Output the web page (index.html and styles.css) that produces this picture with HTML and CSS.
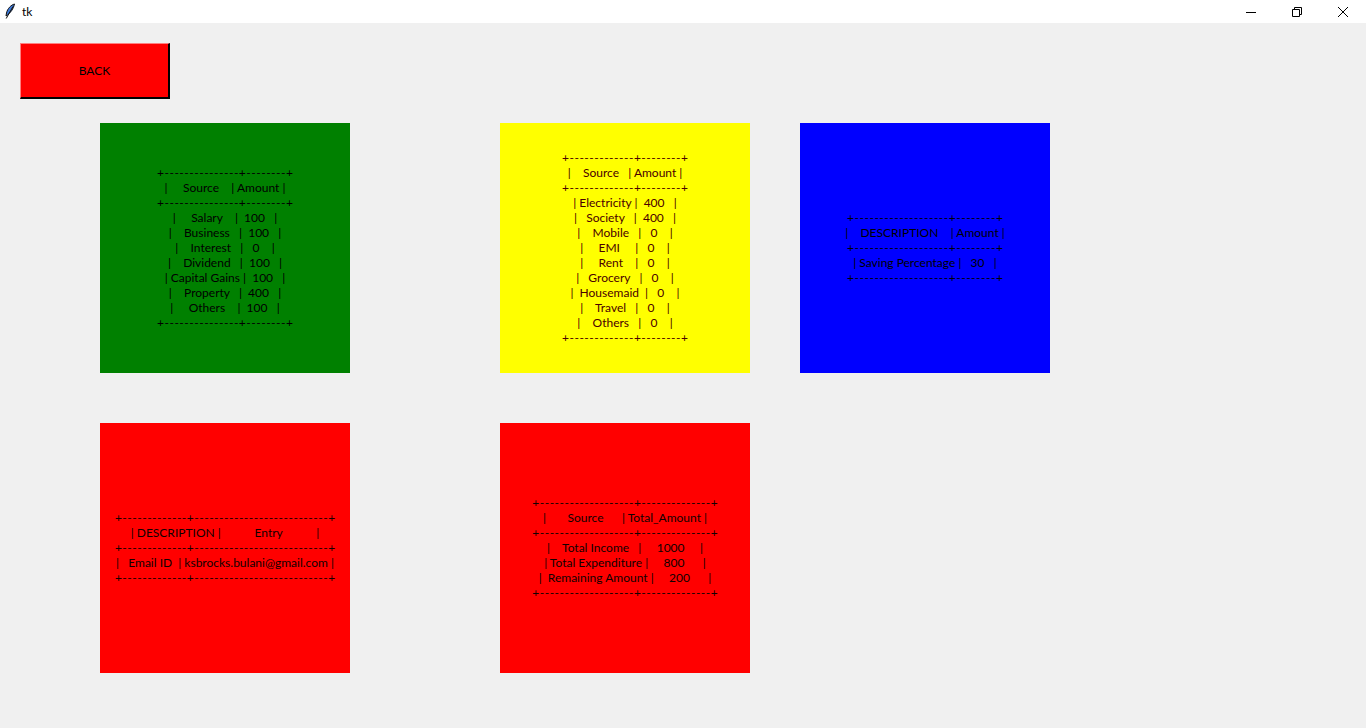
FILE: index.html
```html
<!DOCTYPE html>
<html>
<head>
<meta charset="utf-8">
<title>tk</title>
<link rel="stylesheet" href="styles.css">
</head>
<body>
<div class="titlebar">
  <div class="title-left">
    <svg class="feather" width="12" height="18" viewBox="0 0 12 18">
      <path d="M10.5 1 C7 2 3.5 5.5 2.5 10 L2 13 L3.5 12 C6.5 9.5 9.5 6 10.5 1 Z" fill="#3c78d8" stroke="#111" stroke-width="1"/>
      <path d="M9 3.5 L2.2 15.5" stroke="#111" stroke-width="1" fill="none"/>
    </svg>
    <span class="title-text">tk</span>
  </div>
  <div class="controls">
    <span class="ctl">
      <svg width="12" height="12" viewBox="0 0 12 12"><path d="M1 6.5 H11" stroke="#000" stroke-width="1"/></svg>
    </span>
    <span class="ctl">
      <svg width="12" height="12" viewBox="0 0 12 12"><path d="M1.5 3.5 H8.5 V10.5 H1.5 Z M3.5 3.5 V1.5 H10.5 V8.5 H8.5" stroke="#000" stroke-width="1" fill="none"/></svg>
    </span>
    <span class="ctl">
      <svg width="12" height="12" viewBox="0 0 12 12"><path d="M1 1 L11 11 M11 1 L1 11" stroke="#000" stroke-width="1"/></svg>
    </span>
  </div>
</div>
<div class="window">
  <button class="back">BACK</button>
  <div class="grid">
<div class="card green col1"><div class="tbl"><span class="rule">+---------------+--------+</span>
|     Source    | Amount |
<span class="rule">+---------------+--------+</span>
|     Salary    |  100   |
|    Business   |  100   |
|    Interest   |   0    |
|    Dividend   |  100   |
| Capital Gains |  100   |
|    Property   |  400   |
|     Others    |  100   |
<span class="rule">+---------------+--------+</span></div></div>
<div class="card yellow col3"><div class="tbl"><span class="rule">+-------------+--------+</span>
|    Source   | Amount |
<span class="rule">+-------------+--------+</span>
| Electricity |  400   |
|   Society   |  400   |
|    Mobile   |   0    |
|     EMI     |   0    |
|     Rent    |   0    |
|   Grocery   |   0    |
|  Housemaid  |   0    |
|    Travel   |   0    |
|    Others   |   0    |
<span class="rule">+-------------+--------+</span></div></div>
<div class="card blue col5"><div class="tbl"><span class="rule">+-------------------+--------+</span>
|    DESCRIPTION    | Amount |
<span class="rule">+-------------------+--------+</span>
| Saving Percentage |   30   |
<span class="rule">+-------------------+--------+</span></div></div>
<div class="card red col1"><div class="tbl"><span class="rule">+-------------+---------------------------+</span>
| DESCRIPTION |           Entry           |
<span class="rule">+-------------+---------------------------+</span>
|   Email ID  | ksbrocks.bulani@gmail.com |
<span class="rule">+-------------+---------------------------+</span></div></div>
<div class="card red2 col3"><div class="tbl"><span class="rule">+-------------------+--------------+</span>
|       Source      | Total_Amount |
<span class="rule">+-------------------+--------------+</span>
|    Total Income   |     1000     |
| Total Expenditure |     800      |
|  Remaining Amount |     200      |
<span class="rule">+-------------------+--------------+</span></div></div>
  </div>
</div>
</body>
</html>
```
FILE: styles.css
```css
html, body {
  margin: 0;
  padding: 0;
  background: #f0f0f0;
  width: 1366px;
  height: 728px;
  overflow: hidden;
  font-family: "Lato", "Noto Sans", sans-serif;
}
.titlebar {
  height: 23px;
  background: #ffffff;
  display: flex;
  justify-content: space-between;
  align-items: center;
}
.title-left {
  display: flex;
  align-items: center;
  padding-left: 4px;
}
.feather {
  display: block;
}
.title-text {
  font-size: 12px;
  margin-left: 6px;
  color: #000;
}
.controls {
  display: flex;
  height: 23px;
}
.ctl {
  width: 46px;
  display: flex;
  align-items: center;
  justify-content: center;
}
.window {
  padding: 20px 0 0 20px;
}
.back {
  display: block;
  width: 150px;
  height: 56px;
  margin: 0;
  padding: 0;
  background: #ff0000;
  border-style: solid;
  border-width: 1px 2px 2px 1px;
  border-color: #ff8080 #000 #000 #ff8080;
  font-family: "Lato", "Noto Sans", sans-serif;
  font-size: 12px;
  color: #000;
}
.grid {
  display: grid;
  grid-template-columns: 250px 150px 250px 50px 250px;
  grid-auto-rows: 250px;
  row-gap: 50px;
  margin-top: 24px;
  margin-left: 80px;
}
.col1 { grid-column: 1; }
.col3 { grid-column: 3; }
.col5 { grid-column: 5; }
.card {
  display: flex;
  align-items: center;
  justify-content: center;
}
.tbl {
  white-space: pre;
  text-align: center;
  font-size: 12px;
  line-height: 15px;
  padding-bottom: 2px;
}
.rule {
  letter-spacing: 0.5px;
  margin-right: -0.5px;
}
.green { background: #008000; color: #000; }
.yellow { background: #ffff00; color: #4a0000; }
.blue { background: #0000ff; color: #000; }
.red { background: #ff0000; color: #100000; }
.red2 { background: #ff0000; color: #100000; }
```
